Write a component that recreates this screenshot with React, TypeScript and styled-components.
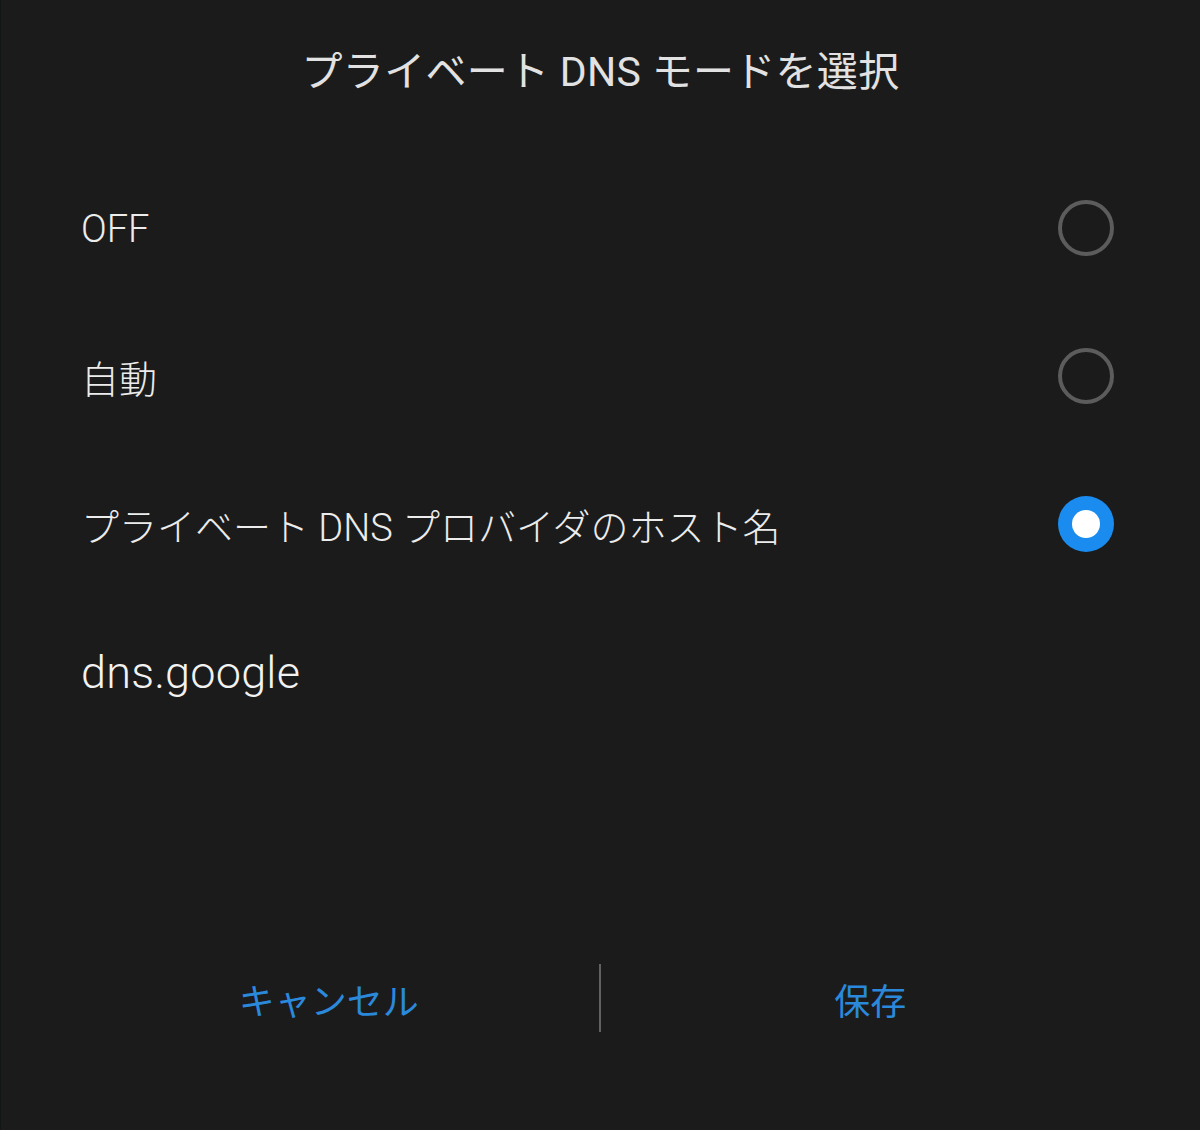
import { useState } from "react";
import styled, { createGlobalStyle } from "styled-components";

const GlobalStyle = createGlobalStyle`
  html, body {
    margin: 0;
    padding: 0;
    background: #1b1b1b;
  }
  body {
    font-family: Roboto, "Noto Sans CJK JP", sans-serif;
    -webkit-font-smoothing: antialiased;
  }
`;

const options = [
  { id: "off", label: "OFF" },
  { id: "auto", label: "自動" },
  { id: "host", label: "プライベート DNS プロバイダのホスト名" },
];

export default function App() {
  const [selected, setSelected] = useState("host");

  return (
    <>
      <GlobalStyle />
      <Dialog>
        <Title>プライベート DNS モードを選択</Title>
        <OptionList>
          {options.map((opt) => (
            <OptionRow key={opt.id} onClick={() => setSelected(opt.id)}>
              <OptionLabel $latin={opt.id === "off"}>{opt.label}</OptionLabel>
              <Radio $checked={selected === opt.id} />
            </OptionRow>
          ))}
          <HostRow>
            <HostText>dns.google</HostText>
          </HostRow>
        </OptionList>
        <Footer>
          <FooterButton>キャンセル</FooterButton>
          <Divider />
          <FooterButton>保存</FooterButton>
        </Footer>
      </Dialog>
    </>
  );
}

const Dialog = styled.div`
  height: 1130px;
  display: flex;
  flex-direction: column;
  background: #1b1b1b;
  border-left: 1px solid #121614;
  box-sizing: border-box;
`;

const Title = styled.h1`
  margin: 0;
  height: 154px;
  padding-top: 44px;
  box-sizing: border-box;
  line-height: 56px;
  text-align: center;
  font-size: 41px;
  font-weight: 400;
  color: #e2e2e2;
  letter-spacing: 0.3px;
`;

const OptionList = styled.div`
  display: flex;
  flex-direction: column;
`;

const OptionRow = styled.div`
  height: 148px;
  display: flex;
  align-items: center;
  justify-content: space-between;
  padding: 0 86px 0 80px;
  cursor: pointer;
`;

const OptionLabel = styled.span<{ $latin: boolean }>`
  font-size: 38px;
  font-weight: 300;
  color: #ececec;
  letter-spacing: 0;
  margin-top: ${(p) => (p.$latin ? "1px" : "0")};
`;

const Radio = styled.span<{ $checked: boolean }>`
  width: 56px;
  height: 56px;
  border-radius: 50%;
  box-sizing: border-box;
  display: flex;
  align-items: center;
  justify-content: center;
  border: ${(p) => (p.$checked ? "none" : "4px solid #5c5c5c")};
  background: ${(p) => (p.$checked ? "#1a8cf0" : "transparent")};

  &::after {
    content: "";
    display: ${(p) => (p.$checked ? "block" : "none")};
    width: 28px;
    height: 28px;
    border-radius: 50%;
    background: #ffffff;
  }
`;

const HostRow = styled.div`
  height: 148px;
  display: flex;
  align-items: center;
  padding: 0 80px;
`;

const HostText = styled.span`
  font-size: 45px;
  font-weight: 300;
  color: #f2f2f2;
  letter-spacing: 0.2px;
`;

const Footer = styled.div`
  margin-top: auto;
  margin-bottom: 98px;
  height: 68px;
  display: flex;
  align-items: center;
  padding: 0 60px 0 58px;
`;

const FooterButton = styled.button`
  flex: 1;
  background: none;
  border: none;
  padding: 0;
  font-family: inherit;
  font-size: 36px;
  font-weight: 400;
  color: #2b89dc;
  cursor: pointer;
  margin-top: 2px;
`;

const Divider = styled.span`
  width: 2px;
  align-self: stretch;
  background: #616161;
`;
